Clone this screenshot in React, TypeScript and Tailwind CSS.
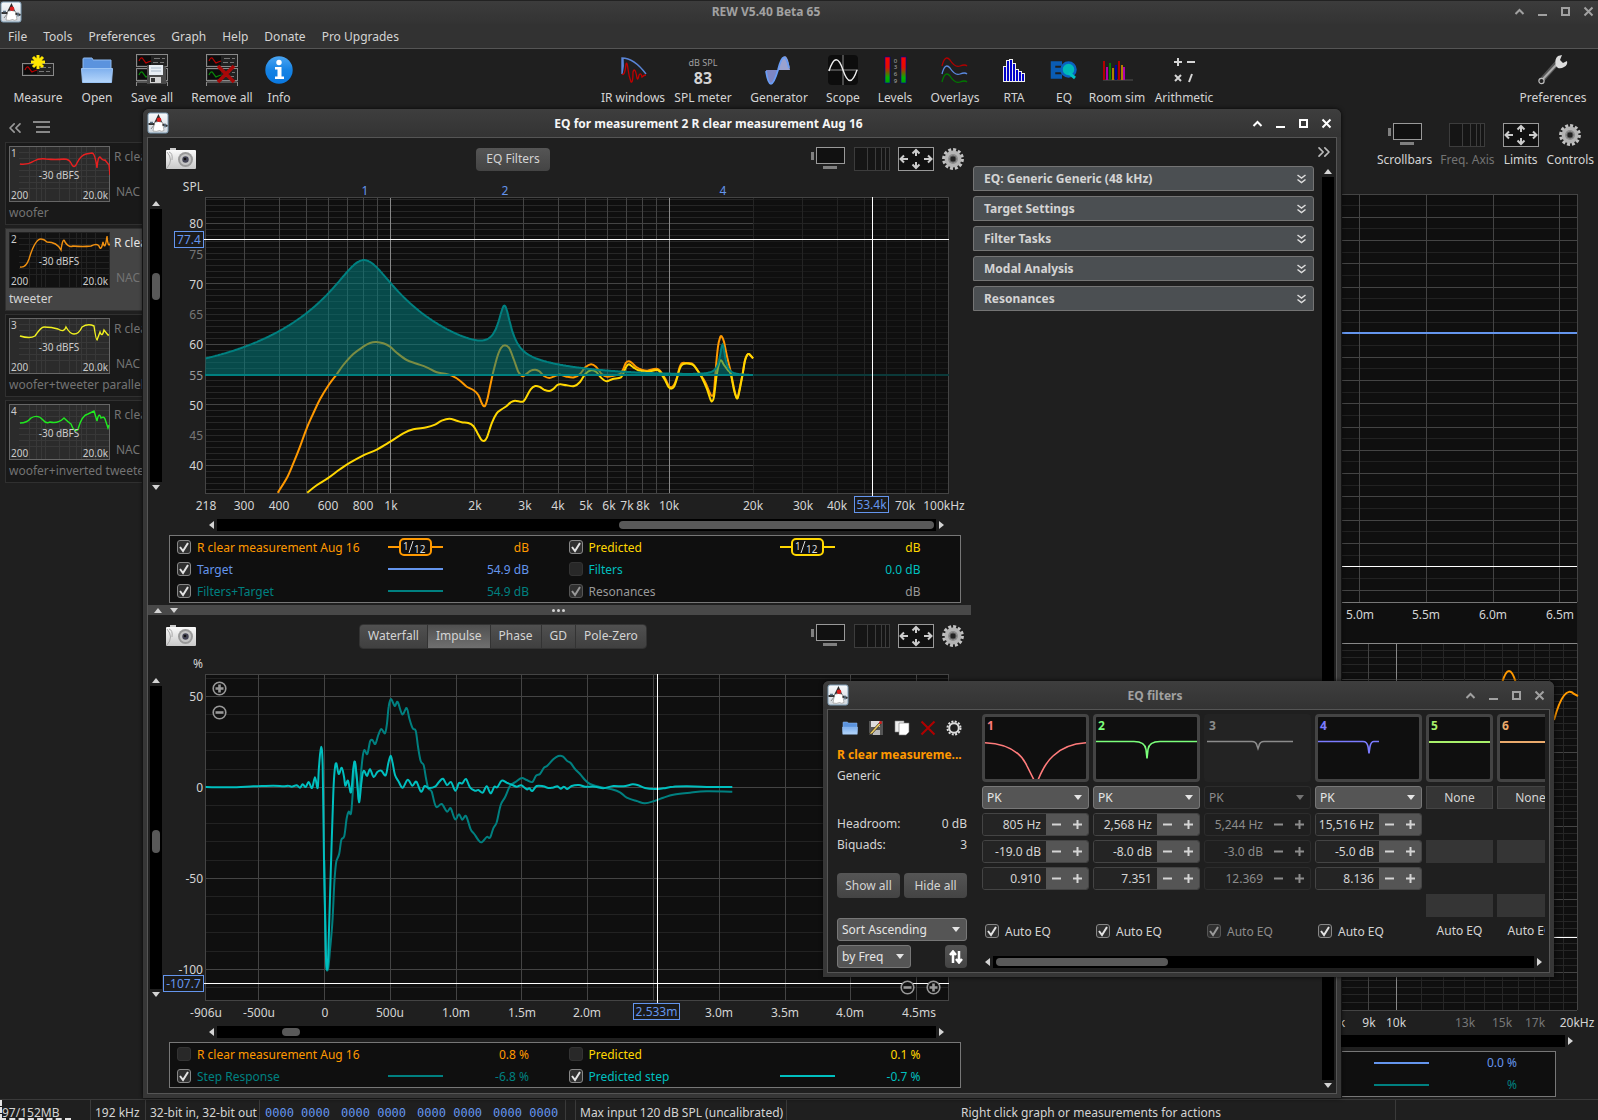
import React from 'react';
import { ChevronsLeft, ChevronsRight } from 'lucide-react';
import clsx from 'clsx';

type Point = [number, number];

const ORANGE = '#ff9900';
const YELLOW = '#ffd700';
const BLUE = '#6495ed';
const TEAL = '#008080';
const CYAN = '#00bfbf';
const SAMPLE_RATE = 48000;

/* ---------- curve helpers ---------- */

const place = (pts: Point[], ox: number, oy: number): Point[] =>
  pts.map(([x, y]) => [x / 3 + ox, y / 3 + oy]);

const smooth = (p: Point[], k = 6) => {
  let d = `M${p[0][0].toFixed(1)} ${p[0][1].toFixed(1)}`;
  for (let i = 0; i < p.length - 1; i++) {
    const a = p[i - 1] || p[i];
    const b = p[i];
    const c = p[i + 1];
    const e = p[i + 2] || c;
    d += `C${(b[0] + (c[0] - a[0]) / k).toFixed(1)} ${(b[1] + (c[1] - a[1]) / k).toFixed(1)} ${(c[0] - (e[0] - b[0]) / k).toFixed(1)} ${(c[1] - (e[1] - b[1]) / k).toFixed(1)} ${c[0].toFixed(1)} ${c[1].toFixed(1)}`;
  }
  return d;
};

// gain in dB of a peaking filter at frequency f
const peak = (f: number, fc: number, gain: number, q: number) => {
  const a = Math.pow(10, gain / 40);
  const x = Math.tan((Math.PI * f) / SAMPLE_RATE) / Math.tan((Math.PI * fc) / SAMPLE_RATE);
  const r = (1 - x * x) ** 2;
  return 10 * Math.log10((r + ((x * a) / q) ** 2) / (r + (x / (a * q)) ** 2));
};

const ORANGE_LOW: Point[] = [[413,1088],[440,1045],[460,1000],[480,950],[500,895],[520,850],[540,808],[566,765],[590,733],[610,705],[640,672],[670,650],[690,639],[709,636],[730,640],[750,650],[770,668],[800,690],[830,701],[860,712],[890,727],[915,731],[935,737],[960,752],[980,770],[1000,780],[1015,795],[1027,823],[1035,828],[1042,808],[1050,770],[1060,725],[1072,680],[1083,654],[1095,646],[1108,655],[1122,690],[1135,725],[1148,739],[1160,731],[1172,722],[1186,719],[1198,724],[1212,738],[1228,744],[1245,738],[1254,735]];
const ORANGE_HIGH: Point[] = [[2,614],[20,620],[43,622],[60,612],[76,592],[93,583],[108,590],[125,612],[142,620],[160,617],[180,612],[190,597],[198,578],[207,574],[217,580],[230,592],[245,599],[262,602],[278,598],[290,596],[300,602],[315,625],[325,645],[333,652],[342,645],[350,625],[358,595],[365,580],[380,579],[395,580],[405,590],[420,612],[435,635],[448,665],[456,678],[462,665],[467,600],[474,530],[480,503],[485,499],[492,515],[500,555],[512,605],[522,655],[528,678],[533,682],[540,650],[548,610],[555,570],[562,554],[567,552],[573,558],[579,565]];
const YELLOW_LOW: Point[] = [[502,1088],[530,1066],[566,1043],[600,1018],[630,998],[670,976],[712,958],[751,935],[790,910],[820,898],[860,892],[885,884],[905,872],[928,866],[950,872],[965,877],[985,879],[1000,888],[1012,908],[1023,928],[1032,933],[1041,922],[1055,880],[1070,850],[1085,838],[1100,828],[1112,817],[1125,812],[1148,815],[1158,803],[1172,778],[1186,768],[1200,771],[1212,779],[1228,783],[1240,777],[1252,765]];
const YELLOW_HIGH: Point[] = [[2,643],[20,646],[43,648],[60,636],[76,612],[93,601],[108,605],[122,622],[139,634],[158,627],[183,622],[192,605],[200,588],[207,583],[220,592],[235,601],[262,605],[290,600],[300,606],[315,630],[325,650],[333,656],[342,650],[350,628],[358,600],[368,583],[395,583],[408,595],[425,622],[440,655],[452,690],[457,693],[462,680],[470,615],[478,578],[484,571],[492,585],[503,600],[512,612],[522,660],[528,680],[533,684],[540,655],[548,612],[555,572],[562,554],[567,552],[573,558],[579,565]];
const IMPULSE: Point[] = [[197,381],[270,382],[340,379],[400,377],[430,379],[445,377],[455,380],[470,376],[480,383],[488,373],[497,381],[506,366],[516,384],[525,352],[533,384],[537,320],[543,260],[548,320],[552,600],[557,860],[560,928],[565,880],[572,640],[580,400],[584,330],[589,310],[596,342],[605,323],[612,350],[616,377],[624,362],[633,397],[640,325],[645,306],[651,360],[657,427],[664,370],[668,340],[673,333],[681,348],[690,328],[701,351],[712,336],[724,332],[737,346],[745,310],[752,287],[758,310],[765,345],[776,365],[788,383],[803,359],[817,377],[829,365],[843,395],[854,378],[866,384],[885,380],[897,366],[909,356],[921,375],[933,366],[946,392],[957,369],[967,370],[978,357],[990,382],[1005,392],[1015,390],[1028,398],[1040,379],[1052,400],[1063,380],[1072,382],[1085,362],[1100,368],[1115,374],[1130,380],[1144,376],[1160,388],[1168,385],[1177,393],[1190,378],[1210,379],[1225,384],[1238,383],[1252,379],[1262,386],[1272,380],[1282,387],[1295,378],[1317,375],[1335,380],[1365,380],[1390,385],[1420,378],[1450,379],[1478,373],[1495,376],[1515,384],[1545,387],[1570,385],[1600,380],[1640,379],[1700,381],[1777,381]];
const STEP: Point[] = [[553,600],[558,890],[564,928],[570,870],[577,790],[583,670],[588,610],[592,596],[598,580],[604,540],[613,528],[620,475],[626,455],[633,460],[638,400],[642,325],[645,308],[651,360],[657,420],[662,350],[668,290],[673,270],[682,282],[690,245],[697,240],[706,252],[715,225],[724,207],[735,220],[741,190],[746,140],[753,117],[764,138],[773,126],[787,163],[800,144],[808,175],[818,205],[827,212],[834,260],[842,303],[851,316],[858,355],[865,385],[875,395],[888,440],[905,432],[921,455],[932,445],[945,478],[957,463],[967,479],[978,468],[992,508],[1003,522],[1015,540],[1025,547],[1040,531],[1050,533],[1060,505],[1070,487],[1082,435],[1095,412],[1110,378],[1128,365],[1145,354],[1160,360],[1177,366],[1188,347],[1200,342],[1212,323],[1222,317],[1240,298],[1255,288],[1268,289],[1282,303],[1292,309],[1305,327],[1320,342],[1335,360],[1350,372],[1380,381],[1415,388],[1440,397],[1460,413],[1490,423],[1515,430],[1545,422],[1570,413],[1600,404],[1650,398],[1700,394],[1777,395]];

/* ---------- icons ---------- */

const DukeIcon = () => (
  <svg width="22" height="22" viewBox="0 0 22 22" className="shrink-0">
    <defs>
      <linearGradient id="duke" x1="0" y1="0" x2="0" y2="1">
        <stop offset="0" stopColor="#f8fafc" />
        <stop offset="1" stopColor="#cfd6dd" />
      </linearGradient>
    </defs>
    <rect x="1" y="1" width="20" height="20" rx="2" fill="url(#duke)" stroke="#7f9db5" />
    <path d="M11.500 2L7 11h8.500z" fill="#2a2a2a" />
    <path d="M7.500 10.500q4-2 8 0l1.500 8q-2.500 1.500-4.500 0-3 1.500-6.500.5z" fill="#fff" stroke="#888" strokeWidth=".6" />
    <path d="M1.500 12h6M15.500 12.500l5 1.500" stroke="#333" strokeWidth="2.200" fill="none" />
    <path d="M3 10.500h3M18 11.500v4" stroke="#5d7386" strokeWidth="1.400" fill="none" />
    <path d="M4 17q3-4 4-5" stroke="#888" fill="none" />
    <circle cx="12" cy="7.800" r="2.300" fill="#d81e1e" />
  </svg>
);

const CameraIcon = () => (
  <svg width="30" height="22" viewBox="0 0 30 22">
    <defs>
      <linearGradient id="cam" x1="0" y1="0" x2="0" y2="1">
        <stop offset="0" stopColor="#fafafa" />
        <stop offset="1" stopColor="#c9c9c9" />
      </linearGradient>
    </defs>
    <rect x="4" y="0" width="6" height="3" fill="#ccc" />
    <rect x="0" y="2" width="30" height="19" rx="1" fill="url(#cam)" />
    <path d="M1 4q7 8 0 16M3 4q4 1 3 8" stroke="#aaa" fill="none" />
    <circle cx="19.500" cy="11.500" r="7.500" fill="#999" />
    <circle cx="19.500" cy="11.500" r="5.500" fill="#c4c4c4" />
    <circle cx="19.500" cy="11.500" r="3.200" fill="#445" />
    <circle cx="19" cy="11" r="1.300" fill="#111" />
  </svg>
);

const ScrollbarsIcon = () => (
  <svg width="36" height="24" viewBox="0 0 36 24">
    <rect x="1" y="5" width="3" height="8" fill="#808080" />
    <rect x="6.500" y=".5" width="28" height="16" fill="#111" stroke="#999" />
    <rect x="13" y="19" width="14" height="3" fill="#808080" />
  </svg>
);

const FreqAxisIcon = () => (
  <svg width="36" height="24" viewBox="0 0 36 24">
    <rect x=".5" y=".5" width="35" height="23" fill="#151515" stroke="#3c3c3c" />
    <path d="M13.500 1v22M21.500 1v22M27.500 1v22M31.500 1v22" stroke="#3c3c3c" />
  </svg>
);

const LimitsIcon = () => (
  <svg width="36" height="24" viewBox="0 0 36 24">
    <rect x=".5" y=".5" width="35" height="23" fill="#111" stroke="#999" />
    <g stroke="#ccc" strokeWidth="2" fill="none">
      <path d="M3 12h7M6 8.500L2.500 12 6 15.500M33 12h-7M30 8.500l3.500 3.500L30 15.500" />
      <path d="M18 3.500V9M14.500 6.500L18 3l3.500 3.500M18 20.500V15M14.500 17.500L18 21l3.500-3.500" />
    </g>
  </svg>
);

const GearIcon = () => (
  <svg width="22" height="22" viewBox="0 0 22 22">
    <circle cx="11" cy="11" r="9.200" fill="none" stroke="#c2c2c2" strokeWidth="3.400" strokeDasharray="2.900 1.900" />
    <circle cx="11" cy="11" r="8.400" fill="#b4b4b4" />
    <circle cx="11" cy="11" r="5" fill="#8c8c8c" />
    <circle cx="11" cy="11" r="3" fill="#222" stroke="#555" />
  </svg>
);

const SmallGearIcon = () => (
  <svg width="16" height="16" viewBox="0 0 16 16">
    <circle cx="8" cy="8" r="6.500" fill="none" stroke="#ddd" strokeWidth="2" strokeDasharray="2 1.400" />
    <circle cx="8" cy="8" r="4.800" fill="none" stroke="#ddd" strokeWidth="2" />
  </svg>
);

const FolderIcon = ({ w, h }: { w: number; h: number }) => (
  <svg width={w} height={h} viewBox="0 0 32 26">
    <defs>
      <linearGradient id="folder" x1="0" y1="0" x2="0" y2="1">
        <stop offset="0" stopColor="#7fb0ee" />
        <stop offset="1" stopColor="#b5d6fb" />
      </linearGradient>
    </defs>
    <path d="M2 13V2q0-1 1-1h8l1 2h18v10z" fill="#5b93de" stroke="#8fbaf0" />
    <path d="M.5 11.500h31l-1 14h-29z" fill="url(#folder)" stroke="#9cc5f5" />
  </svg>
);

const StripIcon = ({ y, wave }: { y: number; wave: string }) => (
  <g>
    <rect x=".5" y={y + 0.5} width="31" height="12" fill="#222" stroke="#8a8a8a" />
    <rect x="2" y={y + 2} width="13" height="9" fill="#0c0c0c" />
    <path d={`M3 ${y + 7}q2-5 4-2t3 4q2-1 5-2`} stroke={wave} strokeWidth="1.300" fill="none" />
    <path d={`M18 ${y + 4.500}h6M26 ${y + 4.500}h3M17 ${y + 8.500}h5M24 ${y + 8.500}h4`} stroke="#777" />
  </g>
);

const MeasureIcon = () => (
  <svg width="32" height="32" viewBox="0 0 32 32">
    <StripIcon y={9} wave="#b80000" />
    <g stroke="#ffe600" strokeWidth="3">
      <path d="M16 1v14M9 8h14M11 3l10 10M21 3L11 13" />
    </g>
  </svg>
);

const SaveAllIcon = () => (
  <svg width="32" height="32" viewBox="0 0 32 32">
    <StripIcon y={0} wave="#b80000" />
    <StripIcon y={14} wave="#0a8a0a" />
    <path d="M.5 32v-4h31v4" fill="#222" stroke="#8a8a8a" />
    <path d="M11 11h16l3 2v17H11z" fill="#4a4a4a" />
    <rect x="13" y="11" width="14" height="10" fill="#e8eef4" />
    <path d="M15 14h10M15 17h10" stroke="#a9b8c8" />
    <rect x="14" y="23" width="11" height="6" fill="#d5d5d5" />
    <rect x="15" y="24" width="4" height="4" fill="#333" />
  </svg>
);

const RemoveAllIcon = () => (
  <svg width="32" height="32" viewBox="0 0 32 32">
    <StripIcon y={0} wave="#b80000" />
    <StripIcon y={14} wave="#0a8a0a" />
    <path d="M.5 32v-4h31v4" fill="#222" stroke="#8a8a8a" />
    <path d="M12 12l16 16M28 12L12 28" stroke="#a80808" strokeWidth="3.600" />
  </svg>
);

const InfoIcon = () => (
  <svg width="28" height="32" viewBox="0 0 28 32">
    <defs>
      <linearGradient id="info" x1="0" y1="0" x2="0" y2="1">
        <stop offset="0" stopColor="#4aa5f2" />
        <stop offset=".5" stopColor="#1583e4" />
        <stop offset="1" stopColor="#0a78e0" />
      </linearGradient>
    </defs>
    <circle cx="14" cy="16" r="13.700" fill="url(#info)" />
    <circle cx="14" cy="8.500" r="2.700" fill="#fff" />
    <path d="M10 13h6.500v9.500H19V25h-9v-2.500h2.500v-7H10z" fill="#fff" />
  </svg>
);

const IrIcon = () => (
  <svg width="32" height="32" viewBox="0 0 32 32" fill="none">
    <path d="M5 20V4q12 0 24 16M5 20q2-8 1-15" stroke="#5b86d8" strokeWidth="1.400" />
    <path d="M5 20q3 2 4-10 1-3 2 5t3 13q2 1 2-10 2-6 4 6 1 3 2-3 2-3 3 2 2-2 4-2" stroke="#c00000" strokeWidth="1.300" />
  </svg>
);

const SplIcon = () => (
  <span className="flex h-8 flex-col items-center justify-center pt-0.5">
    <span className="text-[9px] leading-[14px] text-neutral-400">dB SPL</span>
    <span className="text-base leading-[16px] font-bold text-neutral-300">83</span>
  </span>
);

const GeneratorIcon = () => (
  <svg width="32" height="32" viewBox="0 0 32 32">
    <path d="M3 16q4 28 12 0z" fill="#7d86c4" />
    <path d="M15 16q8-28 12 0z" fill="#9aa2cf" />
    <path d="M3 17q4 26 12-1 6-24 11-2" stroke="#6a9df5" strokeWidth="1.800" fill="none" />
  </svg>
);

const ScopeIcon = () => (
  <svg width="32" height="32" viewBox="0 0 32 32" fill="none">
    <rect x="1" y="1" width="30" height="30" rx="4" fill="#0d0d0d" />
    <path d="M16 1v30M1 16h30" stroke="#888" />
    <path d="M2 17q7-22 14-1t14 0" stroke="#eee" strokeWidth="1.400" />
  </svg>
);

const LevelsIcon = () => (
  <svg width="24" height="32" viewBox="0 0 24 32">
    <defs>
      <linearGradient id="lvl" x1="0" y1="0" x2="0" y2="1">
        <stop offset="0" stopColor="#f00" />
        <stop offset=".4" stopColor="#e01000" />
        <stop offset=".8" stopColor="#00b400" />
        <stop offset="1" stopColor="#00a000" />
      </linearGradient>
    </defs>
    <rect x="2" y="3" width="5" height="26" fill="url(#lvl)" stroke="#0000b0" strokeWidth=".6" />
    <rect x="18" y="3" width="5" height="26" fill="url(#lvl)" stroke="#0000b0" strokeWidth=".6" />
    <g fontSize="6" fill="#aaa" textAnchor="middle">
      <text x="12.500" y="9">0</text>
      <text x="12.500" y="15">3</text>
      <text x="12.500" y="22">6</text>
      <text x="12.500" y="29">9</text>
    </g>
  </svg>
);

const OverlaysIcon = () => (
  <svg width="32" height="32" viewBox="0 0 32 32" fill="none" strokeWidth="1.300">
    <path d="M3 12q3-12 8-6 5 8 10 6t7 0" stroke="#b00000" />
    <path d="M3 20q3-12 8-6 5 8 10 6t7 0" stroke="#5b8ae0" />
    <path d="M3 28q3-12 8-6 5 8 10 6t7 0" stroke="#007800" />
  </svg>
);

const RtaIcon = () => (
  <svg width="24" height="32" viewBox="0 0 24 32" fill="#0000c8" stroke="#eee">
    {[12, 6, 5, 9, 15, 17, 19].map((y, i) => (
      <rect key={i} x={1.5 + i * 3} y={y + 0.5} width="3" height={27 - y} />
    ))}
  </svg>
);

const EqIcon = () => (
  <svg width="28" height="32" viewBox="0 0 28 32" fill="none">
    <path d="M12 9.500H3v13h9M3 16h8" stroke="#0a5cb4" strokeWidth="4.500" />
    <circle cx="18.500" cy="15.500" r="7" fill="#00b8b8" stroke="#0a62c0" strokeWidth="2.500" />
    <path d="M19 19l6 5" stroke="#00c0c0" strokeWidth="3" />
  </svg>
);

const RoomSimIcon = () => (
  <svg width="32" height="32" viewBox="0 0 32 32" strokeWidth="2">
    <path d="M2 26h30" stroke="#555" strokeWidth="1" />
    <path d="M3 7v19M18 7v19" stroke="#b00000" />
    <path d="M6 13v13M23 13v13" stroke="#b000b0" />
    <path d="M9 9v17" stroke="#008000" />
    <path d="M12 14v12M21 11v15" stroke="#b08000" />
    <path d="M15 11v15" stroke="#0000a0" />
  </svg>
);

const ArithmeticIcon = () => (
  <svg width="28" height="32" viewBox="0 0 28 32" stroke="#d4d4d4" strokeWidth="2">
    <path d="M4 8h8M8 4v8M17 8h8M5 21l6 6M11 21l-6 6M22 20l-3 8" />
  </svg>
);

const WrenchIcon = () => (
  <svg width="32" height="32" viewBox="0 0 32 32">
    <path d="M4 27L20 9" stroke="#555" strokeWidth="5" strokeLinecap="round" />
    <path d="M5 26L20 10" stroke="#aaa" strokeWidth="2" />
    <circle cx="4.500" cy="27" r="2.600" fill="#222" stroke="#bbb" strokeWidth="1.200" />
    <path d="M19 12q-2-7 2-10l4-1-2 5 3 3 4-2q1 4-3 6-3 2-6 1z" fill="#ddd" />
  </svg>
);

const Triangle = ({ dir, className }: { dir: 'up' | 'down' | 'left' | 'right'; className?: string }) => {
  const d = { up: 'M4 0l4 5H0z', down: 'M0 0h8L4 5z', left: 'M5 0v8L0 4z', right: 'M0 0v8l5-4z' }[dir];
  const side = dir === 'left' || dir === 'right';
  return (
    <svg width={side ? 5 : 8} height={side ? 8 : 5} className={clsx('shrink-0', className || 'fill-neutral-300')}>
      <path d={d} />
    </svg>
  );
};

/* ---------- shared widgets ---------- */

const WindowControls = ({ bright }: { bright?: boolean }) => (
  <div className={clsx('flex items-center gap-3', bright ? 'text-white' : 'text-neutral-400')}>
    <button aria-label="Shade"><svg width="11" height="11" fill="none" stroke="currentColor" strokeWidth="2"><path d="M1.500 8l4-4 4 4" /></svg></button>
    <button aria-label="Minimize"><svg width="11" height="11" fill="none" stroke="currentColor" strokeWidth="2"><path d="M1 9h9" /></svg></button>
    <button aria-label="Maximize"><svg width="11" height="11" fill="none" stroke="currentColor" strokeWidth="2"><path d="M2 2h7v7H2z" /></svg></button>
    <button aria-label="Close"><svg width="11" height="11" fill="none" stroke="currentColor" strokeWidth="2"><path d="M1.500 1.500l8 8M9.500 1.500l-8 8" /></svg></button>
  </div>
);

const Check = ({ label, checked, dim, color, className }: { label: string; checked?: boolean; dim?: boolean; color?: string; className?: string }) => (
  <label className={clsx('flex items-center gap-1.5 whitespace-nowrap', className)}>
    <span className="relative block h-3.5 w-3.5">
      <input
        type="checkbox"
        defaultChecked={checked}
        disabled={dim}
        className={clsx('peer block h-3.5 w-3.5 appearance-none rounded-[3px] border border-[#333] bg-[#282828] checked:bg-[#303030]', dim ? 'checked:border-[#555]' : 'checked:border-[#888]')}
      />
      <svg width="14" height="14" className="pointer-events-none absolute inset-0 hidden peer-checked:block" fill="none" stroke={dim ? '#999' : '#e4e4e4'} strokeWidth="2">
        <path d="M3 7l3 4 5-8" />
      </svg>
    </span>
    <span className="pt-px" style={{ color }}>{label}</span>
  </label>
);

const VScroll = ({ before, thumb, className }: { before: number; thumb: number; className?: string }) => (
  <div className={clsx('flex w-3 shrink-0 flex-col items-center', className)}>
    <div className="flex h-[11px] items-center"><Triangle dir="up" /></div>
    <div className="w-3 flex-1 bg-black px-0.5">
      <div style={{ height: before }} />
      <div className="rounded-full bg-[#595959]" style={{ height: thumb }} />
    </div>
    <div className="flex h-[11px] items-center"><Triangle dir="down" /></div>
  </div>
);

const HScroll = ({ before, thumb, className }: { before: number; thumb: number; className?: string }) => (
  <div className={clsx('flex h-3 items-center', className)}>
    <div className="flex w-[11px] justify-center"><Triangle dir="left" /></div>
    <div className="flex h-3 flex-1 items-center bg-black">
      <div style={{ width: before }} />
      <div className="h-2 rounded-full bg-[#595959]" style={{ width: thumb }} />
    </div>
    <div className="flex w-[11px] justify-center"><Triangle dir="right" /></div>
  </div>
);

const button = 'rounded-[4px] bg-linear-to-b from-[#555] to-[#444]';

interface Trace {
  label: string;
  color: string;
  value: string;
  checked?: boolean;
  line?: boolean;
  smoothing?: boolean;
  dim?: boolean;
}

const TraceRow = ({ t }: { t: Trace }) => (
  <div className="flex h-[22px] w-[391px] items-center">
    <Check label={t.label} checked={t.checked} color={t.color} dim={t.dim} className="w-[211px]" />
    <svg width="55" height="18">
      {(t.line || t.smoothing) && <path d="M0 9h55" stroke={t.color} strokeWidth="2" />}
      {t.smoothing && (
        <g>
          <rect x="12" y="1" width="31" height="16" rx="4" fill="#0f0f0f" stroke={t.color} strokeWidth="2" />
          <path d="M25 3l-4 12" stroke="#ddd" />
          <text x="15" y="12" fontSize="10" fill="#ddd">1</text>
          <text x="26" y="15" fontSize="10" fill="#ddd">12</text>
        </g>
      )}
    </svg>
    <span className="w-[86px] pt-px text-right" style={{ color: t.color }}>{t.value}</span>
  </div>
);

const Legend = ({ traces }: { traces: Trace[] }) => (
  <div className="mt-1 mr-[10px] ml-[21px] grid grid-cols-2 border border-[#777] bg-[#0f0f0f] pl-[7px]">
    {traces.map((t) => <TraceRow key={t.label} t={t} />)}
  </div>
);

const PaneHeader = ({ children, className }: { children: React.ReactNode; className?: string }) => (
  <div className="flex h-10 items-center pt-0.5 pr-[7px] pl-[18px]">
    <button aria-label="Capture graph"><CameraIcon /></button>
    <div className={clsx('flex flex-1 justify-center', className)}>{children}</div>
    <div className="flex items-center gap-2">
      <button aria-label="Scrollbars"><ScrollbarsIcon /></button>
      <button aria-label="Frequency axis"><FreqAxisIcon /></button>
      <button aria-label="Limits"><LimitsIcon /></button>
      <button aria-label="Controls"><GearIcon /></button>
    </div>
  </div>
);

const ZoomBadge = ({ x, y, plus }: { x: number; y: number; plus?: boolean }) => (
  <g stroke="#999" fill="#111">
    <circle cx={x} cy={y} r="6.300" strokeWidth="1.600" />
    <path d={`M${x - 4} ${y}h8${plus ? `M${x} ${y - 4}v8` : ''}`} strokeWidth="2.600" />
  </g>
);

const Readout = ({ x, y, w, text }: { x: number; y: number; w: number; text: string }) => (
  <g>
    <rect x={x + 0.5} y={y + 0.5} width={w} height="16" fill="#1a1a1a" stroke={BLUE} />
    <text x={x + w / 2 + 0.5} y={y + 13} textAnchor="middle" fill={BLUE}>{text}</text>
  </g>
);

/* ---------- charts ---------- */

const SplChart = () => {
  const fx = (f: number) => 227.3 + 279 * Math.log10(f / 1000);
  const dy = (d: number) => 45.3 + (80 - d) * 6.05;
  const snap = (n: number) => Math.floor(n) + 0.5;
  const base = dy(54.9);
  const freqs = [300, 400, 500, 600, 700, 800, 900, 1000, 2000, 3000, 4000, 5000, 6000, 7000, 8000, 9000, 10000];
  const high = [20000, 30000, 40000, 50000, 60000, 70000, 80000, 90000];
  const levels = Array.from({ length: 49 }, (_, i) => 84 - i);
  const target: Point[] = [];
  for (let f = 218; f < 20000; f *= 1.006) {
    target.push([fx(f), dy(54.9 + peak(f, 805, 19, 0.91) + peak(f, 2568, 8, 7.351) + peak(f, 15516, 5, 8.136))]);
  }
  const line = target.map(([x, y]) => `${x.toFixed(1)} ${y.toFixed(1)}`).join('L');
  const ticks: [string, number][] = [['218', 43], ['300', 81], ['400', 116], ['600', 165], ['800', 200], ['1k', 228], ['2k', 312], ['3k', 362], ['4k', 395], ['5k', 423], ['6k', 446], ['7k', 464], ['8k', 480], ['10k', 506], ['20k', 590], ['30k', 640], ['40k', 674], ['70k', 742], ['100kHz', 781]];
  const orange = smooth([...place(ORANGE_LOW, -23, -48), ...place(ORANGE_HIGH, 397, -8)]);
  const yellow = smooth([...place(YELLOW_LOW, -23, -48), ...place(YELLOW_HIGH, 397, -8)]);
  return (
    <svg width="808" height="337" fontSize="12" fill="none">
      <rect x="42.500" y="19.500" width="743" height="296" fill="#0f0f0f" stroke="#444" />
      <g shapeRendering="crispEdges">
        {levels.map((d) => {
          const y = snap(dy(d));
          const major = d % 10 === 0;
          return (
            <g key={d}>
              <path d={`M43 ${y}H590`} stroke={major ? '#444' : '#272727'} />
              <path d={`M590 ${y}H785`} stroke={major ? '#242424' : '#1a1a1a'} />
            </g>
          );
        })}
        {freqs.map((f) => (
          <path key={f} d={`M${snap(fx(f))} 20V315`} stroke={f === 1000 || f === 10000 ? '#888' : '#444'} />
        ))}
        {high.map((f) => <path key={f} d={`M${snap(fx(f))} 20V315`} stroke="#242424" />)}
      </g>
      <path d={orange} stroke={ORANGE} strokeWidth="2" />
      <path d={yellow} stroke={YELLOW} strokeWidth="2" />
      <path d={`M42 ${base}L${line}L590 ${base}z`} fill={TEAL} fillOpacity=".52" />
      <path d={`M${line}`} stroke={TEAL} strokeWidth="2" />
      <path d="M42 197H590" stroke={TEAL} strokeWidth="2" />
      <path d="M590 197H786" stroke="#0b3a3a" strokeWidth="2" />
      <path d="M41 61.500H786M709.500 19V318" stroke="#fff" shapeRendering="crispEdges" />
      <g fill="#d4d4d4" textAnchor="end">
        <text x="40" y="13">SPL</text>
        {[80, 70, 60, 50, 40].map((d) => <text key={d} x="40" y={Math.round(dy(d)) + 5}>{d}</text>)}
        {[75, 65, 55, 45].map((d) => <text key={d} x="40" y={Math.round(dy(d)) + 5} fill={d === 55 ? '#999' : '#777'}>{d}</text>)}
      </g>
      <g fill="#d4d4d4" textAnchor="middle">
        {ticks.map(([t, x]) => <text key={t} x={x} y="332">{t}</text>)}
      </g>
      <g fill={BLUE} textAnchor="middle">
        <text x="202" y="17">1</text>
        <text x="342" y="17">2</text>
        <text x="560" y="17">4</text>
      </g>
      <Readout x={11} y={53} w={29} text="77.4" />
      <Readout x={691} y={318} w={34} text="53.4k" />
    </svg>
  );
};

const ImpulseChart = () => {
  const tx = (t: number) => Math.floor(161.5 + 131.6 * t) + 0.5;
  const py = (p: number) => Math.floor(132.3 - 1.82 * p) + 0.5;
  const levels = Array.from({ length: 18 }, (_, i) => 60 - i * 10);
  const times = [-0.5, 0, 0.5, 1, 1.5, 2, 2.5, 3, 3.5, 4, 4.5];
  const ticks: [string, number][] = [['-906u', 43], ['-500u', 96], ['0', 162], ['500u', 227], ['1.0m', 293], ['1.5m', 359], ['2.0m', 424], ['3.0m', 556], ['3.5m', 622], ['4.0m', 687], ['4.5ms', 756]];
  return (
    <svg width="808" height="367" fontSize="12" fill="none">
      <rect x="42.500" y="19.500" width="743" height="326" fill="#0f0f0f" stroke="#444" />
      <g shapeRendering="crispEdges">
        {levels.map((p) => <path key={p} d={`M43 ${py(p)}H785`} stroke={p % 50 === 0 ? '#444' : '#222'} />)}
        {times.map((t) => <path key={t} d={`M${tx(t)} 20V345`} stroke="#444" />)}
      </g>
      <path d={smooth(place(STEP, -23, 5))} stroke={TEAL} strokeWidth="2" />
      <path d={smooth(place(IMPULSE, -23, 5))} stroke={CYAN} strokeWidth="2" />
      <path d="M41 328.500H786M494.500 19V348" stroke="#fff" shapeRendering="crispEdges" />
      <ZoomBadge x={56.500} y={33.500} plus />
      <ZoomBadge x={56.500} y={57.500} />
      <ZoomBadge x={744.500} y={332.500} />
      <ZoomBadge x={770.500} y={332.500} plus />
      <g fill="#d4d4d4" textAnchor="end">
        <text x="40" y="13">%</text>
        {[50, 0, -50, -100].map((p) => <text key={p} x="40" y={Math.floor(py(p)) + 5}>{p}</text>)}
      </g>
      <g fill="#d4d4d4" textAnchor="middle">
        {ticks.map(([t, x]) => <text key={t} x={x} y="362">{t}</text>)}
      </g>
      <Readout x={0} y={320} w={40} text="-107.7" />
      <Readout x={470} y={348} w={46} text="2.533m" />
    </svg>
  );
};

// graphs of the main window, mostly hidden by the EQ window
const BackChart = () => {
  const rows = Array.from({ length: 35 }, (_, i) => i);
  const bins = Array.from({ length: 50 }, (_, i) => i);
  const dimTicks: [string, number][] = [['13k', 123], ['15k', 160], ['17k', 193]];
  return (
    <svg width="256" height="862" fontSize="12" fill="none">
      <rect x="-2" y="24" width="237" height="817" fill="#0f0f0f" />
      <g shapeRendering="crispEdges">
        {rows.map((i) => (
          <path key={i} d={`M0 ${Math.floor(24 + i * 11.65) + 0.5}H235`} stroke={i % 2 ? '#222' : '#444'} />
        ))}
        <path d="M17.500 24v408M84.500 24v408M151.500 24v408M217.500 24v408M235.500 24v408" stroke="#444" />
        <path d="M0 432.500h235" stroke="#777" />
        {bins.map((i) => (
          <path key={i} d={`M0 ${Math.floor(473 + i * 7.33) + 0.5}H235`} stroke={i % 10 === 5 ? '#444' : '#262626'} />
        ))}
        <path d="M79.500 473v367M101.500 473v367M122.500 473v367M142.500 473v367M160.500 473v367M176.500 473v367M192.500 473v367M207.500 473v367M221.500 473v367" stroke="#262626" />
        <path d="M26.500 473v367M235.500 473v367M0 840.500h235" stroke="#444" />
        <path d="M54.500 473v367M0 473.500h235" stroke="#888" />
        <path d="M0 396.500h235M0 767.500h235" stroke="#fff" />
      </g>
      <path d="M0 163h235" stroke={BLUE} strokeWidth="2" />
      <path d="M160 513q7-24 14 0M212 550q10-36 20-26l4 2" stroke={ORANGE} strokeWidth="2" />
      <g fill="#d4d4d4" textAnchor="middle">
        <text x="18" y="449">5.0m</text>
        <text x="84" y="449">5.5m</text>
        <text x="151" y="449">6.0m</text>
        <text x="218" y="449">6.5m</text>
        <text x="0" y="857">k</text>
        <text x="27" y="857">9k</text>
        <text x="54" y="857">10k</text>
        <text x="235" y="857">20kHz</text>
        {dimTicks.map(([t, x]) => <text key={t} x={x} y="857" fill="#777">{t}</text>)}
      </g>
    </svg>
  );
};

/* ---------- main window ---------- */

const LEFT_TOOLS = [
  { label: 'Measure', icon: <MeasureIcon />, w: 'w-[68px]' },
  { label: 'Open', icon: <FolderIcon w={32} h={26} />, w: 'w-[50px]' },
  { label: 'Save all', icon: <SaveAllIcon />, w: 'w-[60px]' },
  { label: 'Remove all', icon: <RemoveAllIcon />, w: 'w-[80px]' },
  { label: 'Info', icon: <InfoIcon />, w: 'w-[34px]' },
];

const MID_TOOLS = [
  { label: 'IR windows', icon: <IrIcon />, w: 'w-[70px]' },
  { label: 'SPL meter', icon: <SplIcon />, w: 'w-[70px]' },
  { label: 'Generator', icon: <GeneratorIcon />, w: 'w-[82px]' },
  { label: 'Scope', icon: <ScopeIcon />, w: 'w-[46px]' },
  { label: 'Levels', icon: <LevelsIcon />, w: 'w-[58px]' },
  { label: 'Overlays', icon: <OverlaysIcon />, w: 'w-[62px]' },
  { label: 'RTA', icon: <RtaIcon />, w: 'w-[56px]' },
  { label: 'EQ', icon: <EqIcon />, w: 'w-[44px]' },
  { label: 'Room sim', icon: <RoomSimIcon />, w: 'w-[62px]' },
  { label: 'Arithmetic', icon: <ArithmeticIcon />, w: 'w-[72px]' },
];

const Tool = ({ label, icon, w }: { label: string; icon: React.ReactNode; w: string }) => (
  <button className={clsx('flex flex-col items-center gap-1 whitespace-nowrap', w)}>
    <span className="flex h-8 items-center">{icon}</span>
    <span className="leading-4">{label}</span>
  </button>
);

const MEASUREMENTS = [
  { name: 'woofer', color: '#e82020', d: 'M11 18q8 1 14-3 5-3 12-2 10 1 18 0 5 0 7 4 3 7 6 0 4-8 9-9l6-1q3 0 5 15 1-12 3-11 3 4 5 3l4 5 1 10' },
  { name: 'tweeter', color: '#f09010', d: 'M11 35q6 1 9-8 6-20 12-20 3 0 6 3 10 0 14 8 2-14 4-8 4 6 8 4 10 1 18 0 6-3 8 0 2 6 4-4 2 10 4-6 1 12 3 8 2-6 1-2', selected: true },
  { name: 'woofer+tweeter parallel', color: '#f0f020', d: 'M11 18q10 3 15 0 6-9 9-9 8 0 14 2 6 4 8-2 4 7 8 7 5 0 8-7 6-4 12-1 2 14 3 14l3-8q2 6 4-2l4 5 1 0' },
  { name: 'woofer+inverted tweeter', color: '#20e820', d: 'M11 19q7 0 11-5 7-4 12 2 3 4 7 2 8 2 14-4 4 4 7 6 4 10 7 5 4-14 10-15l6-3 3 10q2-10 4-3 3-2 4 1l3 9 1-3' },
];

const MeasurementCard = ({ m, index }: { m: (typeof MEASUREMENTS)[number]; index: number }) => (
  <li className={clsx('flex h-[83px] flex-col overflow-hidden border border-r-0 border-[#303030] pt-[3px] pl-[3px] whitespace-nowrap', m.selected ? 'bg-[#444]' : 'bg-[#191919]')}>
    <div className="flex gap-1">
      <svg width="101" height="56" fill="none" fontSize="10" className="shrink-0">
        <rect x=".5" y=".5" width="100" height="55" fill={m.selected ? '#111' : '#2b2b2b'} stroke={m.selected ? '#222' : '#666'} />
        <path d="M10 6.500h90M10 12.500h90M10 18.500h90M10 24.500h90M10 30.500h90M10 36.500h90M10 42.500h90M20.500 1v54M27.500 1v54M32.500 1v54M36.500 1v54M50.500 1v54M60.500 1v54M67.500 1v54M72.500 1v54M77.500 1v54M86.500 1v54" stroke={m.selected ? '#222' : '#383838'} shapeRendering="crispEdges" />
        <path d={m.d} stroke={m.color} strokeWidth="1.400" />
        <g fill="#ccc">
          <text x="2" y="11">{index}</text>
          <text x="50" y="33" textAnchor="middle">-30 dBFS</text>
          <text x="2" y="53">200</text>
          <text x="99" y="53" textAnchor="end">20.0k</text>
        </g>
      </svg>
      <div className="flex flex-col gap-[19px] pt-[3px] leading-4 text-neutral-500">
        <span className={clsx(m.selected && 'text-neutral-200')}>R clear</span>
        <span className="pl-0.5">NAC</span>
      </div>
    </div>
    <span className={clsx('pt-[3px] leading-4', m.selected ? 'text-neutral-300' : 'text-neutral-500')}>{m.name}</span>
  </li>
);

const Sidebar = () => (
  <aside className="w-[142px] shrink-0 overflow-hidden pt-[9px] pl-[5px]">
    <div className="flex h-[25px] items-center gap-2 pb-1">
      <button aria-label="Collapse"><ChevronsLeft size={20} strokeWidth={2} color="#999" /></button>
      <button aria-label="Menu"><svg width="17" height="13" stroke="#888" strokeWidth="2"><path d="M0 1h17M3 6h14M3 11h14" /></svg></button>
    </div>
    <ul className="flex flex-col gap-[3px]">
      {MEASUREMENTS.map((m, i) => <MeasurementCard key={m.name} m={m} index={i + 1} />)}
    </ul>
  </aside>
);

const BackPanel = () => (
  <section className="w-[256px] shrink-0">
    <div className="flex h-[62px] justify-end gap-2 pt-[15px] pr-1 leading-4">
      <button className="flex flex-col items-center"><ScrollbarsIcon /><span className="pt-[5px]">Scrollbars</span></button>
      <button className="flex flex-col items-center text-neutral-500"><FreqAxisIcon /><span className="pt-[5px]">Freq. Axis</span></button>
      <button className="flex flex-col items-center"><LimitsIcon /><span className="pt-[5px]">Limits</span></button>
      <button className="flex flex-col items-center"><span className="flex h-6 items-center"><GearIcon /></span><span className="pt-[5px]">Controls</span></button>
    </div>
    <BackChart />
    <HScroll before={0} thumb={0} className="mt-[3px] mr-[22px] -ml-3" />
    <div className="mt-1 mr-[42px] flex flex-col border border-l-0 border-[#777] bg-[#0f0f0f] pr-[38px]">
      <div className="flex h-[22px] items-center justify-end text-[#6495ed]">
        <span className="h-0.5 w-[55px] bg-[#6495ed]" /><span className="w-[88px] text-right">0.0 %</span>
      </div>
      <div className="flex h-[22px] items-center justify-end text-[#008080]">
        <span className="h-0.5 w-[55px] bg-[#008080]" /><span className="w-[88px] text-right">%</span>
      </div>
    </div>
  </section>
);

const StatusBar = () => (
  <footer className="flex h-[21px] shrink-0 items-stretch border-t border-[#3a3a3a] leading-[26px] whitespace-nowrap">
    <div className="w-[91px] border-r border-[#3a3a3a]">
      <div className="h-5 w-[71px] overflow-hidden border-b-2 border-l-2 border-dashed border-neutral-200">97/152MB</div>
    </div>
    <div className="w-[55px] border-r border-[#3a3a3a] pl-1">192 kHz</div>
    <div className="w-[114px] border-r border-[#3a3a3a] pl-1">32-bit in, 32-bit out</div>
    <div className="flex w-[306px] gap-[11px] border-r border-[#3a3a3a] pl-[5px] font-['DejaVu_Sans_Mono',monospace] text-[#6495ed]">
      <span>0000 0000</span>
      <span>0000 0000</span>
      <span>0000 0000</span>
      <span>0000 0000</span>
    </div>
    <div className="w-[10px] border-r border-[#3a3a3a]" />
    <div className="w-[211px] border-r border-[#3a3a3a] pl-1">Max input 120 dB SPL (uncalibrated)</div>
    <div className="flex-1 border-r border-[#3a3a3a] text-center">Right click graph or measurements for actions</div>
    <div className="w-[202px]" />
  </footer>
);

/* ---------- EQ window ---------- */

const SPL_TRACES: Trace[] = [
  { label: 'R clear measurement Aug 16', color: ORANGE, value: 'dB', checked: true, smoothing: true },
  { label: 'Predicted', color: YELLOW, value: 'dB', checked: true, smoothing: true },
  { label: 'Target', color: BLUE, value: '54.9 dB', checked: true, line: true },
  { label: 'Filters', color: CYAN, value: '0.0 dB' },
  { label: 'Filters+Target', color: TEAL, value: '54.9 dB', checked: true, line: true },
  { label: 'Resonances', color: '#999', value: 'dB', checked: true, dim: true },
];

const IMPULSE_TRACES: Trace[] = [
  { label: 'R clear measurement Aug 16', color: ORANGE, value: '0.8 %' },
  { label: 'Predicted', color: YELLOW, value: '0.1 %' },
  { label: 'Step Response', color: TEAL, value: '-6.8 %', checked: true, line: true },
  { label: 'Predicted step', color: CYAN, value: '-0.7 %', checked: true, line: true },
];

const GRAPH_TABS = ['Waterfall', 'Impulse', 'Phase', 'GD', 'Pole-Zero'];
const SECTIONS = ['EQ: Generic Generic (48 kHz)', 'Target Settings', 'Filter Tasks', 'Modal Analysis', 'Resonances'];

interface WindowProps {
  title: string;
  active?: boolean;
  className: string;
  children: React.ReactNode;
}

const Window = ({ title, active, className, children }: WindowProps) => (
  <section className={clsx('absolute flex flex-col rounded-t-md bg-[#363636] px-1 pb-1 shadow-[0_0_4px_rgba(0,0,0,0.8)]', className)}>
    <header className="-mx-1 flex h-7 shrink-0 items-center rounded-t-md bg-linear-to-b from-[#3e3e3e] to-[#333] pr-[9px] pl-1">
      <DukeIcon />
      <h2 className={clsx('flex-1 pt-px pr-1 text-center font-bold', active ? 'text-neutral-100' : 'text-neutral-400')}>{title}</h2>
      <WindowControls bright={active} />
    </header>
    <div className="flex flex-1 border border-[#555] bg-[#1f1f1f]">{children}</div>
  </section>
);

const EqWindow = () => (
  <Window title="EQ for measurement 2 R clear measurement Aug 16" active className="top-[109px] left-[143px] w-[1198px]">
    <div className="flex w-[823px] shrink-0 flex-col pb-[5px]">
      <PaneHeader className="pl-5">
        <button className={clsx(button, 'h-[23px] px-[10px]')}>EQ Filters</button>
      </PaneHeader>
      <div className="flex">
        <VScroll before={64} thumb={27} className="mr-px ml-0.5 pt-5 pb-[22px]" />
        <SplChart />
      </div>
      <HScroll before={402} thumb={315} className="mt-1 mr-6 ml-[58px]" />
      <Legend traces={SPL_TRACES} />
      <div className="mt-0.5 flex h-2.5 items-center gap-2 bg-[#484848] pl-1.5">
        <Triangle dir="up" />
        <Triangle dir="down" />
        <div className="flex flex-1 justify-center gap-0.5 pr-10">
          <i className="h-[3px] w-[3px] rounded-full bg-neutral-300" />
          <i className="h-[3px] w-[3px] rounded-full bg-neutral-300" />
          <i className="h-[3px] w-[3px] rounded-full bg-neutral-300" />
        </div>
      </div>
      <PaneHeader>
        <div className="flex overflow-hidden rounded-[4px] border border-[#333]">
          {GRAPH_TABS.map((tab) => (
            <button key={tab} className={clsx('h-[23px] border-r border-[#333] bg-linear-to-b px-2 last:border-0', tab === 'Impulse' ? 'from-[#505050] to-[#707070]' : 'from-[#505050] to-[#404040]')}>
              {tab}
            </button>
          ))}
        </div>
      </PaneHeader>
      <div className="flex">
        <VScroll before={144} thumb={23} className="mr-px ml-0.5 pt-5 pb-[22px]" />
        <ImpulseChart />
      </div>
      <HScroll before={65} thumb={18} className="mt-1 mr-6 ml-[58px]" />
      <Legend traces={IMPULSE_TRACES} />
    </div>
    <div className="flex flex-1 flex-col">
      <div className="flex h-7 items-center justify-end pr-0.5">
        <button aria-label="Expand"><ChevronsRight size={20} color="#bbb" /></button>
      </div>
      <div className="flex flex-1 justify-between pr-0.5 pl-0.5">
        <div className="flex w-[341px] flex-col gap-[5px]">
          {SECTIONS.map((s) => (
            <button key={s} className="flex h-[25px] items-center justify-between rounded-t-[3px] border border-[#747474] bg-[#4b4f52] pr-[7px] pl-2.5 font-bold text-neutral-300">
              {s}
              <svg width="9" height="10" fill="none" stroke="#ddd" strokeWidth="1.500"><path d="M.5 1l4 3 4-3M.5 5.500l4 3 4-3" /></svg>
            </button>
          ))}
        </div>
        <VScroll before={0} thumb={0} className="pb-0.5" />
      </div>
    </div>
  </Window>
);

/* ---------- EQ filters window ---------- */

interface Filter {
  id: number;
  color: string;
  curve: string;
  freq: string;
  gain: string;
  q: string;
  off?: boolean;
}

const FILTERS: Filter[] = [
  { id: 1, color: '#ff7b7b', curve: 'M0 25.700Q32 27 42 49L49 63M53 63Q60 46 68 39 80 27 101 25.700', freq: '805 Hz', gain: '-19.0 dB', q: '0.910' },
  { id: 2, color: '#7bff7b', curve: 'M0 24.500h38q11 0 12 8l1 9 1-9q1-8 12-8h37', freq: '2,568 Hz', gain: '-8.0 dB', q: '7.351' },
  { id: 3, color: '#8c8c8c', curve: 'M0 24.500h45q4 0 5 4l1 3 1-3q1-4 5-4h29', freq: '5,244 Hz', gain: '-3.0 dB', q: '12.369', off: true },
  { id: 4, color: '#7b7bff', curve: 'M0 24.500h45q4 0 5 5l1 7 1-7q1-5 4-5h5', freq: '15,516 Hz', gain: '-5.0 dB', q: '8.136' },
];

const Spinner = ({ label, value, off }: { label: string; value: string; off?: boolean }) => (
  <div className={clsx('flex h-[23px] overflow-hidden rounded-[3px] border', off ? 'border-[#2c2c2c] text-[#8c8c8c]' : 'border-[#444] text-neutral-300')}>
    <input aria-label={label} defaultValue={value} disabled={off} className={clsx('w-[63px] min-w-0 pr-[5px] text-right', off ? 'bg-transparent' : 'bg-[#242424]')} />
    <div className={clsx('grid flex-1 grid-cols-2 place-items-center', !off && 'bg-[#555]')}>
      <button aria-label="Decrease" disabled={off} className="flex"><svg width="9" height="9" stroke="currentColor" strokeWidth="2"><path d="M0 4.500h9" /></svg></button>
      <button aria-label="Increase" disabled={off} className="flex"><svg width="9" height="9" stroke="currentColor" strokeWidth="2"><path d="M0 4.500h9M4.500 0v9" /></svg></button>
    </div>
  </div>
);

const Select = ({ label, value, off, className }: { label: string; value: string; off?: boolean; className?: string }) => (
  <div className={clsx('relative h-[23px]', className)}>
    <select aria-label={label} disabled={off} className={clsx('h-[23px] w-full appearance-none rounded-[3px] border pl-1', off ? 'border-[#2c2c2c] bg-transparent text-[#8c8c8c] opacity-100' : 'border-[#777] bg-[#555] text-neutral-200')}>
      <option>{value}</option>
    </select>
    <Triangle dir="down" className={clsx('pointer-events-none absolute top-[9px] right-[7px]', off ? 'fill-neutral-500' : 'fill-neutral-200')} />
  </div>
);

const FilterColumn = ({ f }: { f: Filter }) => (
  <div className="flex w-[107px] shrink-0 flex-col gap-1">
    <div className={clsx('h-[68px] overflow-hidden rounded-[4px] border-[3px]', f.off ? 'border-transparent bg-[#232323]' : 'border-[#444] bg-[#0f0f0f]')}>
      <svg width="101" height="62" fill="none">
        <text x="2" y="13" fontSize="12" fontWeight="bold" fill={f.color}>{f.id}</text>
        <path d={f.curve} stroke={f.color} strokeWidth="1.600" />
      </svg>
    </div>
    <Select label={`Filter ${f.id} type`} value="PK" off={f.off} />
    <Spinner label={`Filter ${f.id} frequency`} value={f.freq} off={f.off} />
    <Spinner label={`Filter ${f.id} gain`} value={f.gain} off={f.off} />
    <Spinner label={`Filter ${f.id} Q`} value={f.q} off={f.off} />
    <div className="h-[23px]" />
    <Check label="Auto EQ" checked dim={f.off} color={f.off ? '#8c8c8c' : undefined} className="h-5 pl-[3px]" />
  </div>
);

const EmptyColumn = ({ id, color }: { id: number; color: string }) => (
  <div className="flex w-[67px] shrink-0 flex-col gap-1">
    <div className="h-[68px] overflow-hidden rounded-[4px] border-[3px] border-[#444] bg-[#0f0f0f]">
      <svg width="61" height="62">
        <text x="2" y="13" fontSize="12" fontWeight="bold" fill={color}>{id}</text>
        <path d="M0 25h61" stroke={color} strokeWidth="2" />
      </svg>
    </div>
    <button className="h-[23px] border border-[#444] bg-[#353535] text-neutral-300">None</button>
    <div className="h-[23px]" />
    <div className="h-[23px] bg-[#353535]" />
    <div className="h-[23px]" />
    <div className="h-[23px] bg-[#353535]" />
    <span className="text-center leading-5">Auto EQ</span>
  </div>
);

const FiltersWindow = () => (
  <Window title="EQ filters" className="top-[681px] left-[823px] w-[731px]">
    <div className="flex w-[139px] shrink-0 flex-col pt-[10px] pb-1 pl-[9px] leading-4">
      <div className="flex h-4 items-center gap-[10px] pl-[5px]">
        <button aria-label="Open"><FolderIcon w={16} h={14} /></button>
        <button aria-label="Save">
          <svg width="16" height="16"><path d="M1 1h14v14H1z" fill="#555" /><path d="M3 1h9v6H3z" fill="#ddd" /><path d="M5 10h7v5H5z" fill="#bbb" /><path d="M1 14L11 3l2 1L4 14z" fill="#e8c860" stroke="#111" strokeWidth=".6" /><circle cx="12.500" cy="2.500" r="1.500" fill="#d02020" /></svg>
        </button>
        <button aria-label="Copy">
          <svg width="16" height="16"><path d="M1 1h9v11H1z" fill="#eee" stroke="#888" strokeWidth=".6" /><path d="M5 3h10v9l-3 3H5z" fill="#fff" stroke="#777" strokeWidth=".6" /></svg>
        </button>
        <button aria-label="Delete">
          <svg width="16" height="16" stroke="#b00000" strokeWidth="2"><path d="M1.500 1.500l13 13M14.500 1.500l-13 13" /></svg>
        </button>
        <button aria-label="Settings"><SmallGearIcon /></button>
      </div>
      <div className="mt-[11px] truncate font-bold text-[#ff9900]">R clear measureme...</div>
      <div className="mt-[5px]">Generic</div>
      <div className="mt-8 flex justify-between"><span>Headroom:</span><span>0 dB</span></div>
      <div className="mt-[5px] flex justify-between"><span>Biquads:</span><span>3</span></div>
      <div className="mt-5 grid grid-cols-2 gap-1">
        <button className={clsx(button, 'h-[25px]')}>Show all</button>
        <button className={clsx(button, 'h-[25px]')}>Hide all</button>
      </div>
      <Select label="Sort order" value="Sort Ascending" className="mt-5" />
      <div className="mt-1 flex justify-between">
        <Select label="Sort key" value="by Freq" className="w-[74px]" />
        <button aria-label="Sort" className={clsx(button, 'flex h-[23px] w-[22px] items-center justify-center')}>
          <svg width="14" height="14" stroke="#fff" strokeWidth="2.500" fill="none"><path d="M4 13V2M1 5l3-3.500L7 5M10 1v11M7 9l3 3.500L13 9" /></svg>
        </button>
      </div>
    </div>
    <div className="ml-[15px] flex min-w-0 flex-1 flex-col justify-between pt-1 pr-1 pb-1">
      <div className="flex gap-1 overflow-hidden">
        {FILTERS.map((f) => <FilterColumn key={f.id} f={f} />)}
        <EmptyColumn id={5} color="#a8f06a" />
        <EmptyColumn id={6} color="#eaaa6c" />
      </div>
      <HScroll before={3} thumb={172} />
    </div>
  </Window>
);

/* ---------- page ---------- */

const MENUS = ['File', 'Tools', 'Preferences', 'Graph', 'Help', 'Donate', 'Pro Upgrades'];

const App: React.FC = () => (
  <div className="relative flex min-h-screen flex-col overflow-hidden bg-[#1f1f1f] font-['Noto_Sans','Open_Sans',sans-serif] text-xs text-neutral-300">
    <header className="flex h-6 items-center border-t border-[#222] bg-linear-to-b from-[#3c3c3c] to-[#333] pr-1 pb-0.5">
      <DukeIcon />
      <h1 className="flex-1 pr-1 text-center font-bold text-neutral-400">REW V5.40 Beta 65</h1>
      <WindowControls />
    </header>
    <nav className="flex h-[25px] items-center border-b border-[#555] bg-[#323232] pt-0.5">
      {MENUS.map((m) => <button key={m} className="px-2">{m}</button>)}
    </nav>
    <div className="flex h-[59px] justify-between pt-[5px]">
      <div className="flex w-[310px] pl-1">
        {LEFT_TOOLS.map((t) => <Tool key={t.label} {...t} />)}
      </div>
      <div className="flex">
        {MID_TOOLS.map((t) => <Tool key={t.label} {...t} />)}
      </div>
      <Tool label="Preferences" icon={<WrenchIcon />} w="w-[90px]" />
    </div>
    <main className="flex flex-1 justify-between">
      <Sidebar />
      <BackPanel />
    </main>
    <StatusBar />
    <EqWindow />
    <FiltersWindow />
  </div>
);

export default App;
